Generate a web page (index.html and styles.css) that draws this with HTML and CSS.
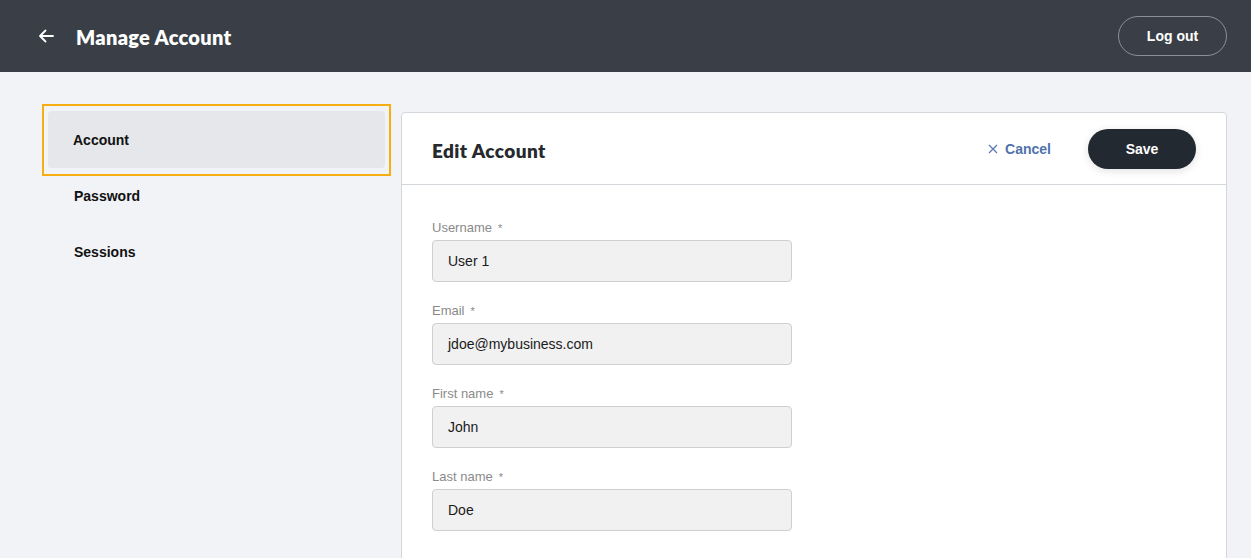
FILE: index.html
```html
<!DOCTYPE html>
<html>
<head>
<meta charset="utf-8">
<link rel="stylesheet" href="styles.css">
</head>
<body>
<header class="topbar">
  <div class="topbar-left">
    <svg class="back-icon" width="16" height="14" viewBox="0 0 16 14"><path d="M15 7H2M7.5 1.5L2 7l5.5 5.5" fill="none" stroke="#fff" stroke-width="1.8" stroke-linecap="round" stroke-linejoin="round"/></svg>
    <h1 class="page-title">Manage Account</h1>
  </div>
  <button class="logout">Log out</button>
</header>
<div class="main">
  <nav class="sidebar">
    <div class="nav-item active"><div class="nav-inner">Account</div></div>
    <div class="nav-item"><div class="nav-inner">Password</div></div>
    <div class="nav-item"><div class="nav-inner">Sessions</div></div>
  </nav>
  <section class="card">
    <div class="card-head">
      <h2 class="card-title">Edit Account</h2>
      <div class="actions">
        <button class="cancel"><svg width="10" height="10" viewBox="0 0 10 10"><path d="M1 1l8 8M9 1L1 9" stroke="#5b7bb5" stroke-width="1.3"/></svg>Cancel</button>
        <button class="save">Save</button>
      </div>
    </div>
    <form class="form">
      <div class="field"><label>Username<span class="req">*</span></label><div class="input">User 1</div></div>
      <div class="field"><label>Email<span class="req">*</span></label><div class="input">jdoe@mybusiness.com</div></div>
      <div class="field"><label>First name<span class="req">*</span></label><div class="input">John</div></div>
      <div class="field"><label>Last name<span class="req">*</span></label><div class="input">Doe</div></div>
    </form>
  </section>
</div>
</body>
</html>
```
FILE: styles.css
```css
* { box-sizing: border-box; }
html, body { margin: 0; padding: 0; }
body {
  background: #f1f3f7;
  font-family: "Liberation Sans", Arial, sans-serif;
  height: 558px;
  overflow: hidden;
}
.topbar {
  height: 72px;
  background: #3a3f47;
  display: flex;
  align-items: center;
  justify-content: space-between;
  padding: 0 24px 0 38px;
}
.topbar-left { display: flex; align-items: center; }
.back-icon { margin-right: 22px; margin-top: -1px; }
.page-title {
  margin: 0;
  margin-top: 2px;
  color: #fff;
  font-family: "Lato", sans-serif;
  font-weight: 800;
  font-size: 20px;
  letter-spacing: 0.3px;
}
.logout {
  width: 109px;
  height: 40px;
  border-radius: 20px;
  border: 1px solid #8b8f96;
  background: transparent;
  color: #fff;
  font-family: "Liberation Sans", Arial, sans-serif;
  font-weight: 700;
  font-size: 14px;
  margin-top: -1px;
}
.main {
  display: flex;
  padding: 32px 24px 0 42px;
  gap: 10px;
}
.sidebar { width: 349px; flex: none; }
.nav-item {
  height: 56px;
  padding: 5px 4px 6px 5px;
  border: 2px solid transparent;
}
.nav-item.active {
  height: 72px;
  border-color: #f6ae11;
  padding: 5px 4px 6px 4px;
  margin-bottom: -10px;
}
.nav-inner {
  height: 100%;
  border-radius: 4px;
  display: flex;
  align-items: center;
  padding-left: 24px;
  font-size: 14px;
  font-weight: 700;
  color: #111;
}
.nav-item:not(.active) .nav-inner { padding-left: 25px; height: 56px; margin-top: -5px; }
.nav-item.active .nav-inner { background: #e6e7ea; padding-left: 25px; }
.card {
  flex: 1;
  margin-top: 8px;
  background: #fff;
  border: 1px solid #d3d6db;
  border-radius: 4px 4px 0 0;
  height: 460px;
}
.card-head {
  height: 72px;
  border-bottom: 1px solid #d3d6db;
  display: flex;
  align-items: center;
  justify-content: space-between;
  padding: 0 30px 0 30px;
}
.card-title {
  margin: 0;
  margin-top: 3px;
  font-family: "Lato", sans-serif;
  font-weight: 800;
  font-size: 19px;
  letter-spacing: 0.4px;
  color: #26292e;
}
.actions { display: flex; align-items: center; }
.cancel {
  background: none;
  border: none;
  display: flex;
  align-items: center;
  gap: 7px;
  color: #4f72ad;
  font-family: "Liberation Sans", Arial, sans-serif;
  font-weight: 700;
  font-size: 14px;
  padding: 0;
  margin-right: 37px;
}
.save {
  width: 108px;
  height: 40px;
  border-radius: 20px;
  border: none;
  background: #232931;
  color: #fff;
  font-family: "Liberation Sans", Arial, sans-serif;
  font-weight: 700;
  font-size: 14px;
  box-shadow: 0 2px 8px rgba(0,0,0,0.12);
}
.form { padding: 35px 30px 0 30px; }
.field { margin-bottom: 21px; }
.field label {
  display: block;
  color: #8a8a8a;
  font-size: 13px;
  line-height: 16px;
  margin-bottom: 4px;
}
.req { margin-left: 6px; font-size: 11px; }
.input {
  width: 360px;
  height: 42px;
  background: #f1f1f1;
  border: 1px solid #cfcfcf;
  border-radius: 4px;
  padding: 0 15px;
  display: flex;
  align-items: center;
  font-size: 14px;
  color: #1a1a1a;
}
```
